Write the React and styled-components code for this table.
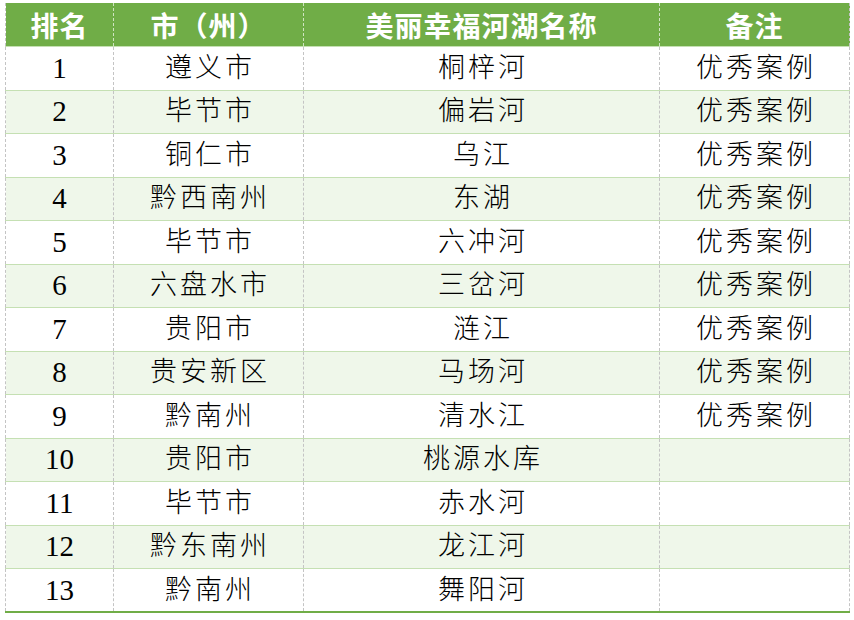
import styled, { createGlobalStyle } from 'styled-components';

const GlobalStyle = createGlobalStyle`
	html, body {
		margin: 0;
		padding: 0;
		background: #ffffff;
	}
`;

const Page = styled.div`
	padding: 3px 5px 0 5px;
	width: 844px;
`;

const Table = styled.table`
	width: 844px;
	border-collapse: collapse;
	table-layout: fixed;
	border-left: 1px dashed #c4c4c4;
	border-bottom: 2px solid #70ad47;
`;

const HeadCell = styled.th`
	height: 43px;
	padding: 0;
	background: #70ad47;
	color: #ffffff;
	font-family: 'Noto Sans CJK SC', sans-serif;
	font-weight: 700;
	font-size: 28px;
	letter-spacing: 1px;
	text-align: center;
	border-right: 1px dashed #cfe3c1;
	&:last-child {
		border-right: 1px dashed #c4c4c4;
	}
`;

const Row = styled.tr`
	height: 43.5px;
	background: ${(p) => (p.$alt ? '#eff7ea' : '#ffffff')};
	border-top: 1.5px solid #c5e0b3;
`;

const Cell = styled.td`
	padding: 0;
	text-align: center;
	color: #000000;
	font-family: 'Liberation Serif', 'Noto Sans CJK SC', serif;
	font-weight: 300;
	font-size: ${(p) => (p.$num ? '29px' : '27px')};
	letter-spacing: ${(p) => (p.$num ? '0' : '3px')};
	text-indent: ${(p) => (p.$num ? '0' : '3px')};
	border-right: 1px dashed #c4c4c4;
	line-height: 1;
`;

const rows = [
	['1', '遵义市', '桐梓河', '优秀案例'],
	['2', '毕节市', '偏岩河', '优秀案例'],
	['3', '铜仁市', '乌江', '优秀案例'],
	['4', '黔西南州', '东湖', '优秀案例'],
	['5', '毕节市', '六冲河', '优秀案例'],
	['6', '六盘水市', '三岔河', '优秀案例'],
	['7', '贵阳市', '涟江', '优秀案例'],
	['8', '贵安新区', '马场河', '优秀案例'],
	['9', '黔南州', '清水江', '优秀案例'],
	['10', '贵阳市', '桃源水库', ''],
	['11', '毕节市', '赤水河', ''],
	['12', '黔东南州', '龙江河', ''],
	['13', '黔南州', '舞阳河', ''],
];

const App = () => {
	return (
		<Page>
			<GlobalStyle />
			<Table>
				<colgroup>
					<col style={{ width: 108 }} />
					<col style={{ width: 190 }} />
					<col style={{ width: 356 }} />
					<col style={{ width: 190 }} />
				</colgroup>
				<thead>
					<tr>
						<HeadCell>排名</HeadCell>
						<HeadCell>市（州）</HeadCell>
						<HeadCell>美丽幸福河湖名称</HeadCell>
						<HeadCell>备注</HeadCell>
					</tr>
				</thead>
				<tbody>
					{rows.map((r, i) => (
						<Row key={r[0]} $alt={i % 2 === 1}>
							<Cell $num>{r[0]}</Cell>
							<Cell>{r[1]}</Cell>
							<Cell>{r[2]}</Cell>
							<Cell>{r[3]}</Cell>
						</Row>
					))}
				</tbody>
			</Table>
		</Page>
	);
};

export default App;
